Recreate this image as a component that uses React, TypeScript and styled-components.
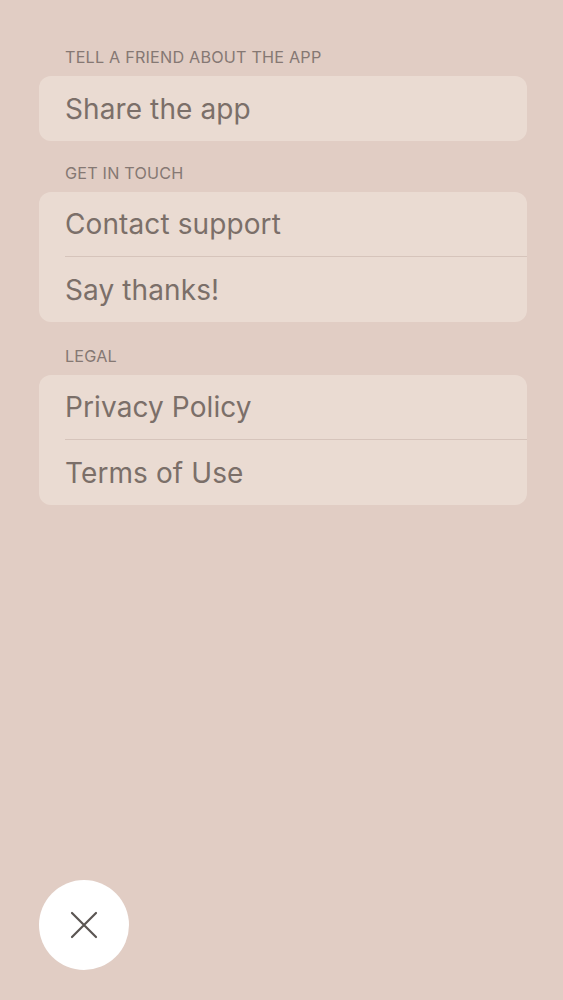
import styled, { createGlobalStyle } from "styled-components";

const GlobalStyle = createGlobalStyle`
  html, body {
    margin: 0;
    padding: 0;
    background: #e1cdc4;
  }
  body {
    font-family: "Inter", "Liberation Sans", sans-serif;
    -webkit-font-smoothing: antialiased;
  }
`;

const Screen = styled.div`
  width: 563px;
  height: 1000px;
  box-sizing: border-box;
  padding: 48px 36px 0 39px;
  display: flex;
  flex-direction: column;
  background: #e1cdc4;
  overflow: hidden;
`;

const Section = styled.section`
  display: flex;
  flex-direction: column;
  & + & {
    margin-top: 23px;
  }
  &:last-of-type {
    margin-top: 25px;
  }
`;

const SectionLabel = styled.div`
  padding-left: 26px;
  height: 18px;
  line-height: 18px;
  font-size: 16.2px;
  color: #857873;
  text-transform: uppercase;
  letter-spacing: 0.2px;
  margin-bottom: 10px;
`;

const Card = styled.div`
  background: #eadbd2;
  border-radius: 12px;
  overflow: hidden;
  display: flex;
  flex-direction: column;
`;

const Row = styled.div<{ $divider?: boolean }>`
  height: 65px;
  margin-left: 26px;
  display: flex;
  align-items: center;
  font-size: 28px;
  color: #7b6f69;
  letter-spacing: 0.1px;
  box-sizing: border-box;
  border-bottom: ${(p) => (p.$divider ? "1px solid #d6c4bb" : "none")};
  cursor: pointer;
`;

const Spacer = styled.div`
  flex: 1;
`;

const CloseButton = styled.button`
  width: 90px;
  height: 90px;
  border-radius: 50%;
  border: none;
  background: #ffffff;
  display: flex;
  align-items: center;
  justify-content: center;
  margin-bottom: 30px;
  padding: 0;
  cursor: pointer;
`;

const sections = [
  { label: "Tell a friend about the app", items: ["Share the app"] },
  { label: "Get in touch", items: ["Contact support", "Say thanks!"] },
  { label: "Legal", items: ["Privacy Policy", "Terms of Use"] },
];

export default function App() {
  return (
    <>
      <GlobalStyle />
      <Screen>
        {sections.map((s) => (
          <Section key={s.label}>
            <SectionLabel>{s.label}</SectionLabel>
            <Card>
              {s.items.map((item, i) => (
                <Row key={item} $divider={i < s.items.length - 1}>
                  {item}
                </Row>
              ))}
            </Card>
          </Section>
        ))}
        <Spacer />
        <CloseButton aria-label="Close">
          <svg width="28" height="28" viewBox="0 0 28 28">
            <path
              d="M2 2 L26 26 M26 2 L2 26"
              stroke="#5a5552"
              strokeWidth="2.2"
              strokeLinecap="round"
            />
          </svg>
        </CloseButton>
      </Screen>
    </>
  );
}
